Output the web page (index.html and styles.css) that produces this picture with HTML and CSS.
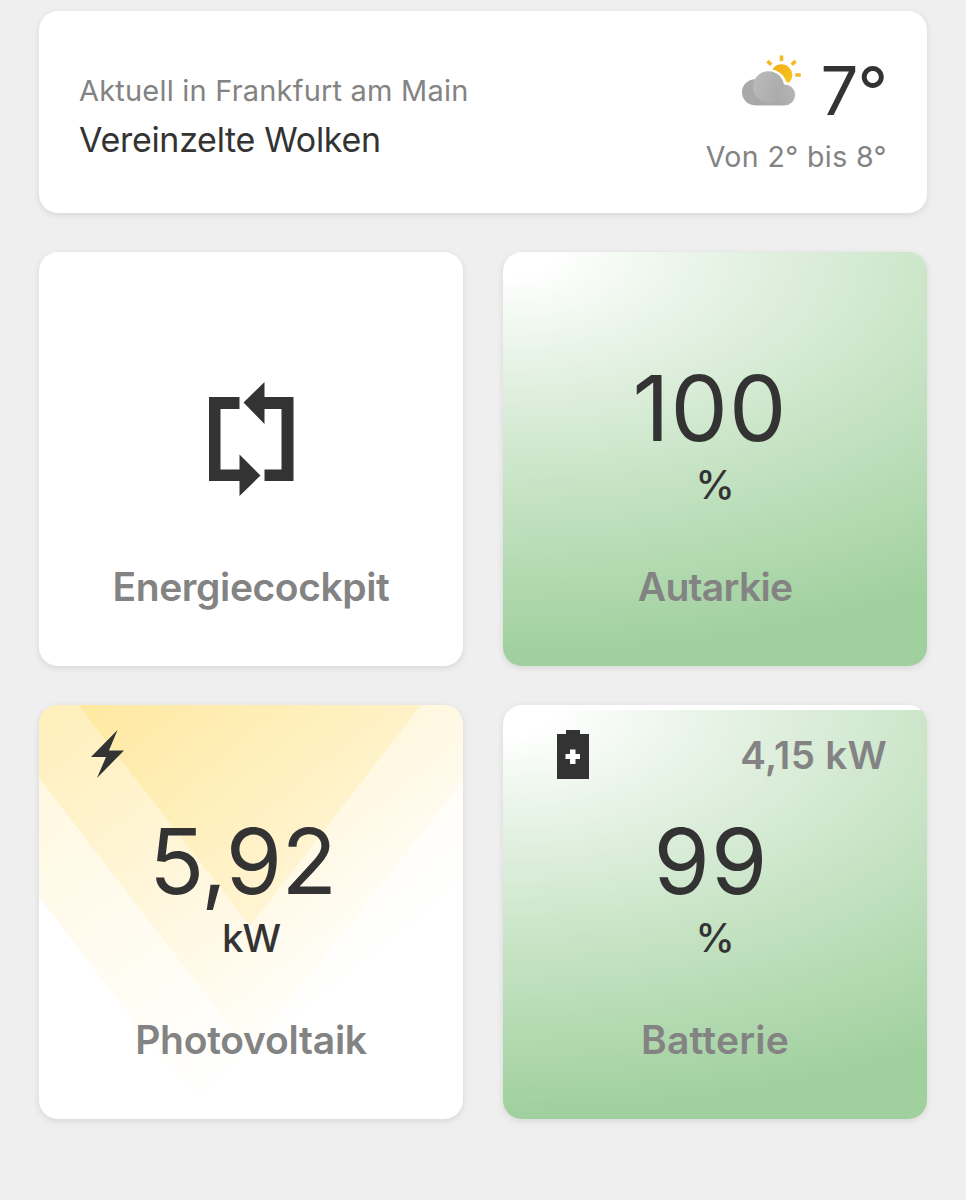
FILE: index.html
```html
<!DOCTYPE html>
<html lang="de">
<head>
    <meta charset="UTF-8">
    <meta name="viewport" content="width=device-width, initial-scale=1.0">
    <title>Energie Dashboard</title>
    <link rel="stylesheet" href="styles.css">
</head>
<body>
    <main class="dashboard">
        <section class="card weather">
            <div class="weather-info">
                <p class="location">Aktuell in Frankfurt am Main</p>
                <p class="condition">Vereinzelte Wolken</p>
            </div>
            <div class="weather-temp">
                <div class="current">
                    <svg class="weather-icon" width="60" height="52" viewBox="0 0 60 52">
                        <defs>
                            <linearGradient id="cloudMain" x1="0" y1="0.3" x2="1" y2="0.7">
                                <stop offset="0" stop-color="#bababa"/>
                                <stop offset="1" stop-color="#a9a9a9"/>
                            </linearGradient>
                            <linearGradient id="cloudSide" x1="0" y1="0.7" x2="1" y2="0.3">
                                <stop offset="0" stop-color="#a9a9a9"/>
                                <stop offset="1" stop-color="#b5b5b5"/>
                            </linearGradient>
                            <linearGradient id="sun" x1="0" y1="0" x2="1" y2="1">
                                <stop offset="0" stop-color="#f2ac18"/>
                                <stop offset="1" stop-color="#f5c81c"/>
                            </linearGradient>
                        </defs>
                        <circle cx="39.5" cy="20" r="10.7" fill="url(#sun)"/>
                        <g stroke="#f4b929" stroke-width="3.6">
                            <path d="M39.5 0.5v5.5"/>
                            <path d="M25.5 6l3.7 3.7"/>
                            <path d="M53.5 6l-3.7 3.7"/>
                            <path d="M53.3 20h5.5"/>
                        </g>
                        <circle cx="26.500" cy="33" r="19" fill="#fff"/>
                        <circle cx="43" cy="39.500" r="12.500" fill="#fff"/>
                        <path d="M13 24.200a13 13 0 0 0 0 26h30V33L20 24z" fill="#a9a9a9"/>
                        <circle cx="42.700" cy="39.800" r="10.400" fill="url(#cloudSide)"/>
                        <path d="M26.500 16.200a15.500 15.500 0 0 0-15.500 15.500c0 9 7 15.500 15.500 15.500h7.500c0-6 2-12 8-15.500a15.500 15.500 0 0 0-15.500-15.500z" fill="url(#cloudMain)"/>
                        <path d="M13 47v3.200h29V47z" fill="#a9a9a9"/>
                    </svg>
                    <span class="degrees">7°</span>
                </div>
                <p class="range">Von 2° bis 8°</p>
            </div>
        </section>

        <section class="card tile">
            <div class="content">
                <svg class="cycle-icon" width="86" height="114" viewBox="0 0 86 114" fill="#333">
                    <path d="M0 15H30.500V27H11.500V87.500H30.500V72.500L51.500 93.500L30.500 114V99H0z"/>
                    <path d="M84.500 99H55.500V87.500H72.500V27H55.500V42L34.500 20.500L55.500 0V15H84.500z"/>
                </svg>
            </div>
            <h2 class="name cockpit">Energiecockpit</h2>
        </section>

        <section class="card tile green">
            <div class="content">
                <span class="value hundred">100</span>
                <span class="unit">%</span>
            </div>
            <h2 class="name autarky">Autarkie</h2>
        </section>

        <section class="card tile solar">
            <svg class="rays" width="424" height="413" viewBox="0 0 424 413">
                <defs>
                    <linearGradient id="rayOuter" gradientUnits="userSpaceOnUse" x1="0" y1="0" x2="260" y2="320">
                        <stop offset="0" stop-color="#ffd95e" stop-opacity="0.22"/>
                        <stop offset="1" stop-color="#ffd95e" stop-opacity="0"/>
                    </linearGradient>
                    <linearGradient id="rayMiddle" gradientUnits="userSpaceOnUse" x1="0" y1="0" x2="260" y2="320">
                        <stop offset="0" stop-color="#ffd95e" stop-opacity="0.26"/>
                        <stop offset="1" stop-color="#ffd95e" stop-opacity="0.02"/>
                    </linearGradient>
                    <linearGradient id="rayInner" gradientUnits="userSpaceOnUse" x1="40" y1="0" x2="230" y2="220">
                        <stop offset="0" stop-color="#ffd95e" stop-opacity="0.3"/>
                        <stop offset="1" stop-color="#ffd95e" stop-opacity="0.15"/>
                    </linearGradient>
                </defs>
                <path d="M0 0H424V192L211 467L0 192z" fill="url(#rayOuter)"/>
                <path d="M0 0H424V76L211 347L0 73z" fill="url(#rayMiddle)"/>
                <path d="M39 0H382L211 221z" fill="url(#rayInner)"/>
            </svg>
            <div class="status">
                <svg class="bolt-icon" width="33" height="48" viewBox="0 0 33 48">
                    <path d="M26.500 0L0 27H15L6 48L33 20.500H18z" fill="#333"/>
                </svg>
            </div>
            <div class="content">
                <span class="value power">5,92</span>
                <span class="unit kilowatt">kW</span>
            </div>
            <h2 class="name">Photovoltaik</h2>
        </section>

        <section class="card tile green battery">
            <div class="status">
                <svg class="battery-icon" width="32" height="49" viewBox="0 0 32 49">
                    <path d="M9 0H23V4H32V49H0V4H9z" fill="#333"/>
                    <path d="M13 19.500H18.500V24H23V29H18.500V34H13V29H8.500V24H13z" fill="#fff"/>
                </svg>
                <span class="rate">4,15 kW</span>
            </div>
            <div class="content">
                <span class="value percent">99</span>
                <span class="unit">%</span>
            </div>
            <h2 class="name charge">Batterie</h2>
        </section>
    </main>
</body>
</html>
```

FILE: styles.css
```css
* {
    box-sizing: border-box;
}
body {
    margin: 0;
    background-color: #efefef;
    color: #333;
    font-family: Inter, "Liberation Sans", sans-serif;
}
p, h2 {
    margin: 0;
}
svg {
    display: block;
}
.dashboard {
    display: grid;
    grid-template-columns: 1fr 1fr;
    grid-template-rows: 202px 413.5px 413.5px;
    gap: 39.3px 40px;
    padding: 11px 39px;
}
.card {
    position: relative;
    overflow: hidden;
    background-color: #fff;
    border-radius: 19px;
    box-shadow: 0 2px 7px rgba(0, 0, 0, 0.1);
}
.weather {
    grid-column: 1 / 3;
    display: flex;
    justify-content: space-between;
    padding: 0 40px;
    white-space: nowrap;
}
.location {
    margin-top: 61px;
    font-size: 29px;
    line-height: 38px;
    letter-spacing: 0.2px;
    color: #838383;
}
.condition {
    margin-top: 7px;
    font-size: 34px;
    line-height: 46px;
    letter-spacing: -0.3px;
}
.weather-temp {
    text-align: right;
}
.current {
    display: flex;
    justify-content: flex-end;
    align-items: flex-start;
    gap: 19px;
    margin-top: 44px;
    height: 81px;
}
.degrees {
    font-size: 67px;
    line-height: 72px;
    letter-spacing: -1px;
}
.range {
    font-size: 28.5px;
    line-height: 42px;
    letter-spacing: 0.4px;
    color: #838383;
}
.tile {
    display: grid;
    grid-template-rows: 98px 210px 1fr;
    justify-items: center;
}
.status {
    grid-row: 1;
    justify-self: stretch;
    position: relative;
    display: flex;
    justify-content: space-between;
    align-items: flex-start;
    padding: 25px 40px 0 52px;
}
.battery .status {
    padding-left: 54px;
}
.content {
    grid-row: 2;
    display: flex;
    flex-direction: column;
    align-items: center;
    position: relative;
}
.cycle-icon {
    margin: 32px 0 0 2px;
}
.value {
    margin-top: 13px;
    font-size: 91px;
    line-height: 91px;
}
.hundred {
    letter-spacing: 1px;
    padding-right: 10px;
}
.power {
    letter-spacing: -0.8px;
    padding-right: 17px;
}
.percent {
    letter-spacing: 1px;
    padding-right: 8px;
}
.unit {
    margin-top: 7px;
    font-size: 39.5px;
    line-height: 48px;
    font-weight: 500;
}
.kilowatt {
    font-size: 38.5px;
    letter-spacing: -1px;
}
.name {
    grid-row: 3;
    position: relative;
    margin-top: 3px;
    font-size: 39px;
    line-height: 48px;
    font-weight: 600;
    letter-spacing: -0.25px;
    color: #838383;
}
.cockpit {
    letter-spacing: -0.4px;
}
.autarky {
    letter-spacing: -0.7px;
}
.charge {
    letter-spacing: 0.2px;
}
.rate {
    font-size: 38.5px;
    line-height: 50px;
    font-weight: 600;
    letter-spacing: 0.3px;
    color: #838383;
}
.green {
    background-image: radial-gradient(790px 405px at 0 0, #fff 0%, #fff 6%, #e9f4e8 25%, #c8e4c6 57%, #a0d09e 100%);
}
/* the fill starts just below the top edge */
.battery {
    background-position: 0 4.5px;
    background-repeat: no-repeat;
}
.rays {
    position: absolute;
    top: 0;
    left: 0;
}
```
